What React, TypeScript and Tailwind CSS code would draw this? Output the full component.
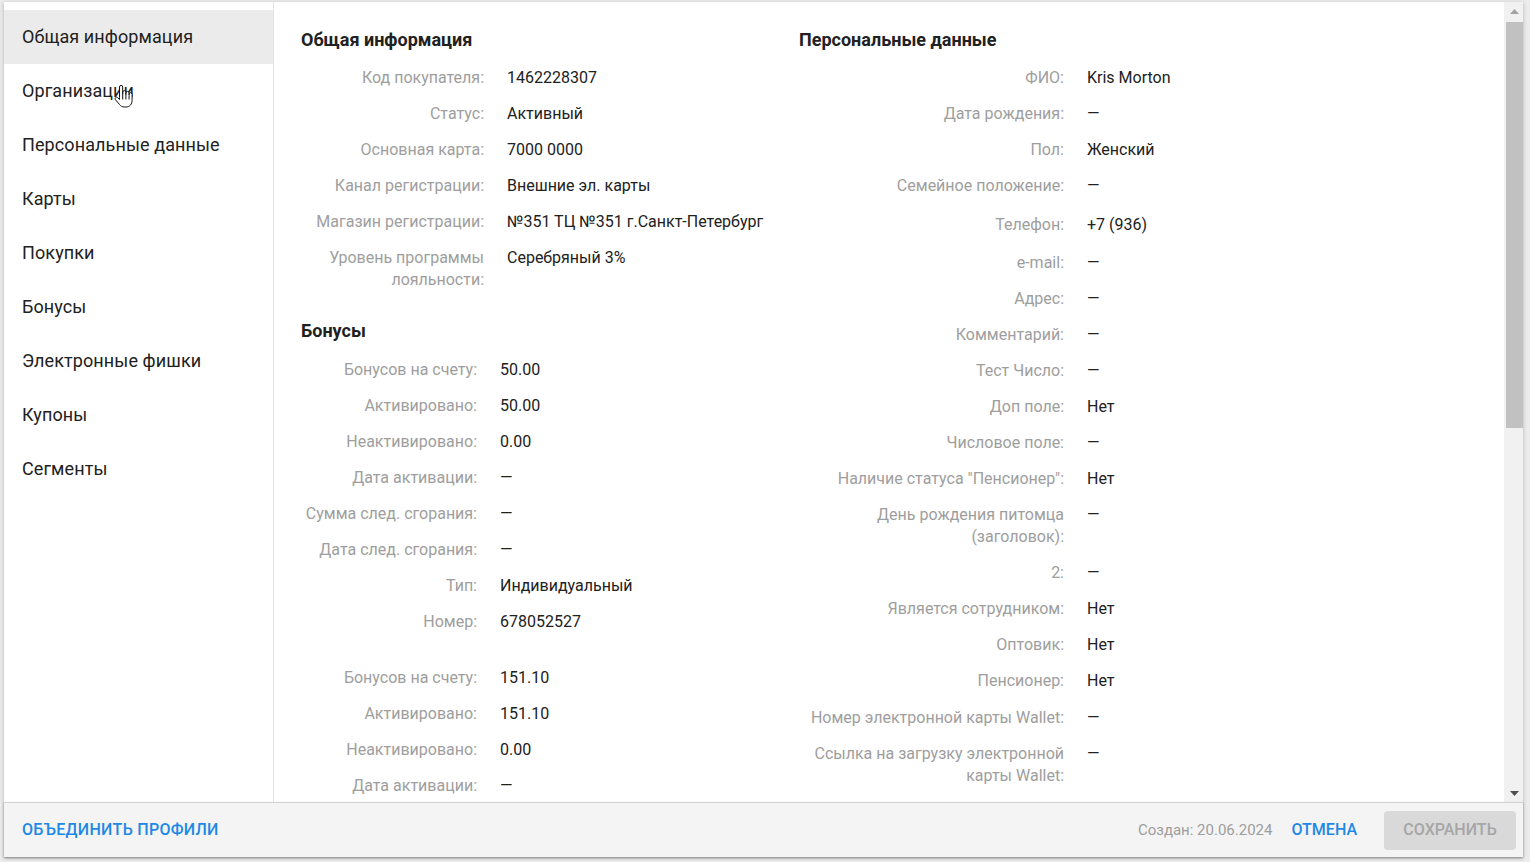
import React from "react";

type Row = { label: string; value: string; tall?: boolean };

const menu = [
  "Общая информация",
  "Организации",
  "Персональные данные",
  "Карты",
  "Покупки",
  "Бонусы",
  "Электронные фишки",
  "Купоны",
  "Сегменты",
];

const general: Row[] = [
  { label: "Код покупателя:", value: "1462228307" },
  { label: "Статус:", value: "Активный" },
  { label: "Основная карта:", value: "7000 0000" },
  { label: "Канал регистрации:", value: "Внешние эл. карты" },
  { label: "Магазин регистрации:", value: "№351 ТЦ №351 г.Санкт-Петербург" },
  { label: "Уровень программы лояльности:", value: "Серебряный 3%" },
];

const accounts: Row[][] = [
  [
    { label: "Бонусов на счету:", value: "50.00" },
    { label: "Активировано:", value: "50.00" },
    { label: "Неактивировано:", value: "0.00" },
    { label: "Дата активации:", value: "—" },
    { label: "Сумма след. сгорания:", value: "—" },
    { label: "Дата след. сгорания:", value: "—" },
    { label: "Тип:", value: "Индивидуальный" },
    { label: "Номер:", value: "678052527" },
  ],
  [
    { label: "Бонусов на счету:", value: "151.10" },
    { label: "Активировано:", value: "151.10" },
    { label: "Неактивировано:", value: "0.00" },
    { label: "Дата активации:", value: "—" },
    { label: "Сумма след. сгорания:", value: "—" },
    { label: "Дата след. сгорания:", value: "—" },
    { label: "Тип:", value: "Семейный" },
    { label: "Номер:", value: "678052528" },
  ],
];

const personal: Row[] = [
  { label: "ФИО:", value: "Kris Morton" },
  { label: "Дата рождения:", value: "—" },
  { label: "Пол:", value: "Женский" },
  { label: "Семейное положение:", value: "—" },
  { label: "Телефон:", value: "+7 (936)", tall: true },
  { label: "e-mail:", value: "—" },
  { label: "Адрес:", value: "—" },
  { label: "Комментарий:", value: "—" },
  { label: "Тест Число:", value: "—" },
  { label: "Доп поле:", value: "Нет" },
  { label: "Числовое поле:", value: "—" },
  { label: "Наличие статуса \"Пенсионер\":", value: "Нет" },
  { label: "День рождения питомца (заголовок):", value: "—" },
  { label: "2:", value: "—" },
  { label: "Является сотрудником:", value: "Нет" },
  { label: "Оптовик:", value: "Нет" },
  { label: "Пенсионер:", value: "Нет" },
  { label: "Номер электронной карты Wallet:", value: "—" },
  { label: "Ссылка на загрузку электронной карты Wallet:", value: "—" },
];

function Field({ row, labelW }: { row: Row; labelW: string }) {
  return (
    <div className={`flex text-[16px] leading-[22px] ${row.tall ? "py-[9.5px]" : "py-[7px]"}`}>
      <div className={`${labelW} shrink-0 text-right text-[#9e9e9e]`}>{row.label}</div>
      <div className="ml-[23px] text-[#212121]">{row.value}</div>
    </div>
  );
}

function Heading({ children, className = "" }: { children: React.ReactNode; className?: string }) {
  return <div className={`text-[18px] font-bold leading-[22px] text-[#212121] ${className}`}>{children}</div>;
}

function HandCursor() {
  return (
    <svg className="absolute left-[109px] top-[81px]" width="22" height="26" viewBox="0 0 22 26">
      <path
        d="M6.5 14.5V4a1.6 1.6 0 0 1 3.2 0v7.5V9.3a1.6 1.6 0 0 1 3.2 0v2.4V10a1.6 1.6 0 0 1 3.2 0v2V11.2a1.5 1.5 0 0 1 3 0v6.3c0 3.6-2.4 6.5-6.2 6.5h-1.6c-2.2 0-3.5-.9-4.7-2.4L2.4 16.6a1.5 1.5 0 0 1 2.2-2l1.9 1.9z"
        fill="#fff"
        stroke="#111"
        strokeWidth="1"
        strokeLinejoin="round"
      />
      <path d="M9.7 11.5v5M12.9 11.7v4.8M16.1 12.2v4.3" stroke="#111" strokeWidth="1" />
    </svg>
  );
}

// classic scrollbar look (headless browser hides the native one)
function Scrollbar() {
  return (
    <div className="flex w-[19px] shrink-0 flex-col bg-[#f1f1f1]">
      <div className="flex h-[18px] items-center justify-center pl-[2px]">
        <svg width="9" height="5" viewBox="0 0 9 5">
          <path d="M0 5L4.5 0L9 5z" fill="#a3a3a3" />
        </svg>
      </div>
      <div className="ml-[2px] mt-[2px] h-[406px] bg-[#c1c1c1]" />
      <div className="flex-1" />
      <div className="flex h-[18px] items-center justify-center pl-[2px]">
        <svg width="9" height="5" viewBox="0 0 9 5">
          <path d="M0 0L9 0L4.5 5z" fill="#505050" />
        </svg>
      </div>
    </div>
  );
}

export default function App() {
  return (
    <div
      className="w-[1530px] h-[862px] bg-[#ececec] pl-[4px] pt-[2px] pr-[7px] pb-[5px]"
      style={{ fontFamily: "Roboto, 'Noto Sans', sans-serif" }}
    >
      <div className="relative flex h-full flex-col bg-white shadow-[0_1px_4px_rgba(0,0,0,0.25)]">
        <div className="flex min-h-0 flex-1">
          <div className="w-[270px] shrink-0 border-r border-[#e3e3e3] pt-2">
            {menu.map((m, i) => (
              <div
                key={m}
                className={`flex h-[54px] items-center pb-[2px] pl-[18px] text-[18px] tracking-[0.1px] text-[#212121] ${i === 0 ? "bg-[#ebebeb]" : ""}`}
              >
                {m}
              </div>
            ))}
          </div>

          <div className="flex-1 overflow-hidden">
            <div className="grid grid-cols-[498px_1fr] pl-[27px] pt-[27px]">
              <div>
                <Heading className="mb-[9px]">Общая информация</Heading>
                {general.map((r) => (
                  <Field key={r.label} row={r} labelW="w-[183px]" />
                ))}
                <Heading className="mt-[22px] mb-[10px]">Бонусы</Heading>
                {accounts.map((acc, i) => (
                  <div key={i} className={i > 0 ? "mt-5" : ""}>
                    {acc.map((r) => (
                      <Field key={r.label} row={r} labelW="w-[176px]" />
                    ))}
                  </div>
                ))}
              </div>
              <div>
                <Heading className="mb-[9px]">Персональные данные</Heading>
                {personal.map((r, i) => (
                  <div key={r.label} className={i === 17 ? "mt-px" : ""}>
                    <Field row={r} labelW="w-[265px]" />
                  </div>
                ))}
              </div>
            </div>
          </div>

          <Scrollbar />
        </div>

        <div className="flex h-[55px] shrink-0 items-center border-t border-[#d2d2d2] bg-[#f4f4f4] pl-[18px] pr-[7px] shadow-[0_1px_2px_rgba(0,0,0,0.3)]">
          <button className="text-[16px] font-medium uppercase tracking-[0.3px] text-[#1e88e5]">Объединить профили</button>
          <div className="flex-1" />
          <span className="text-[15px] text-[#9e9e9e]">Создан: 20.06.2024</span>
          <button className="ml-[19px] text-[16px] font-medium uppercase text-[#1e88e5]">Отмена</button>
          <button className="ml-[27px] h-[39px] w-[132px] rounded-[4px] bg-[#d9d9d9] text-[16px] font-medium uppercase text-[#a6a6a6]">
            Сохранить
          </button>
        </div>

        <HandCursor />
      </div>
    </div>
  );
}
